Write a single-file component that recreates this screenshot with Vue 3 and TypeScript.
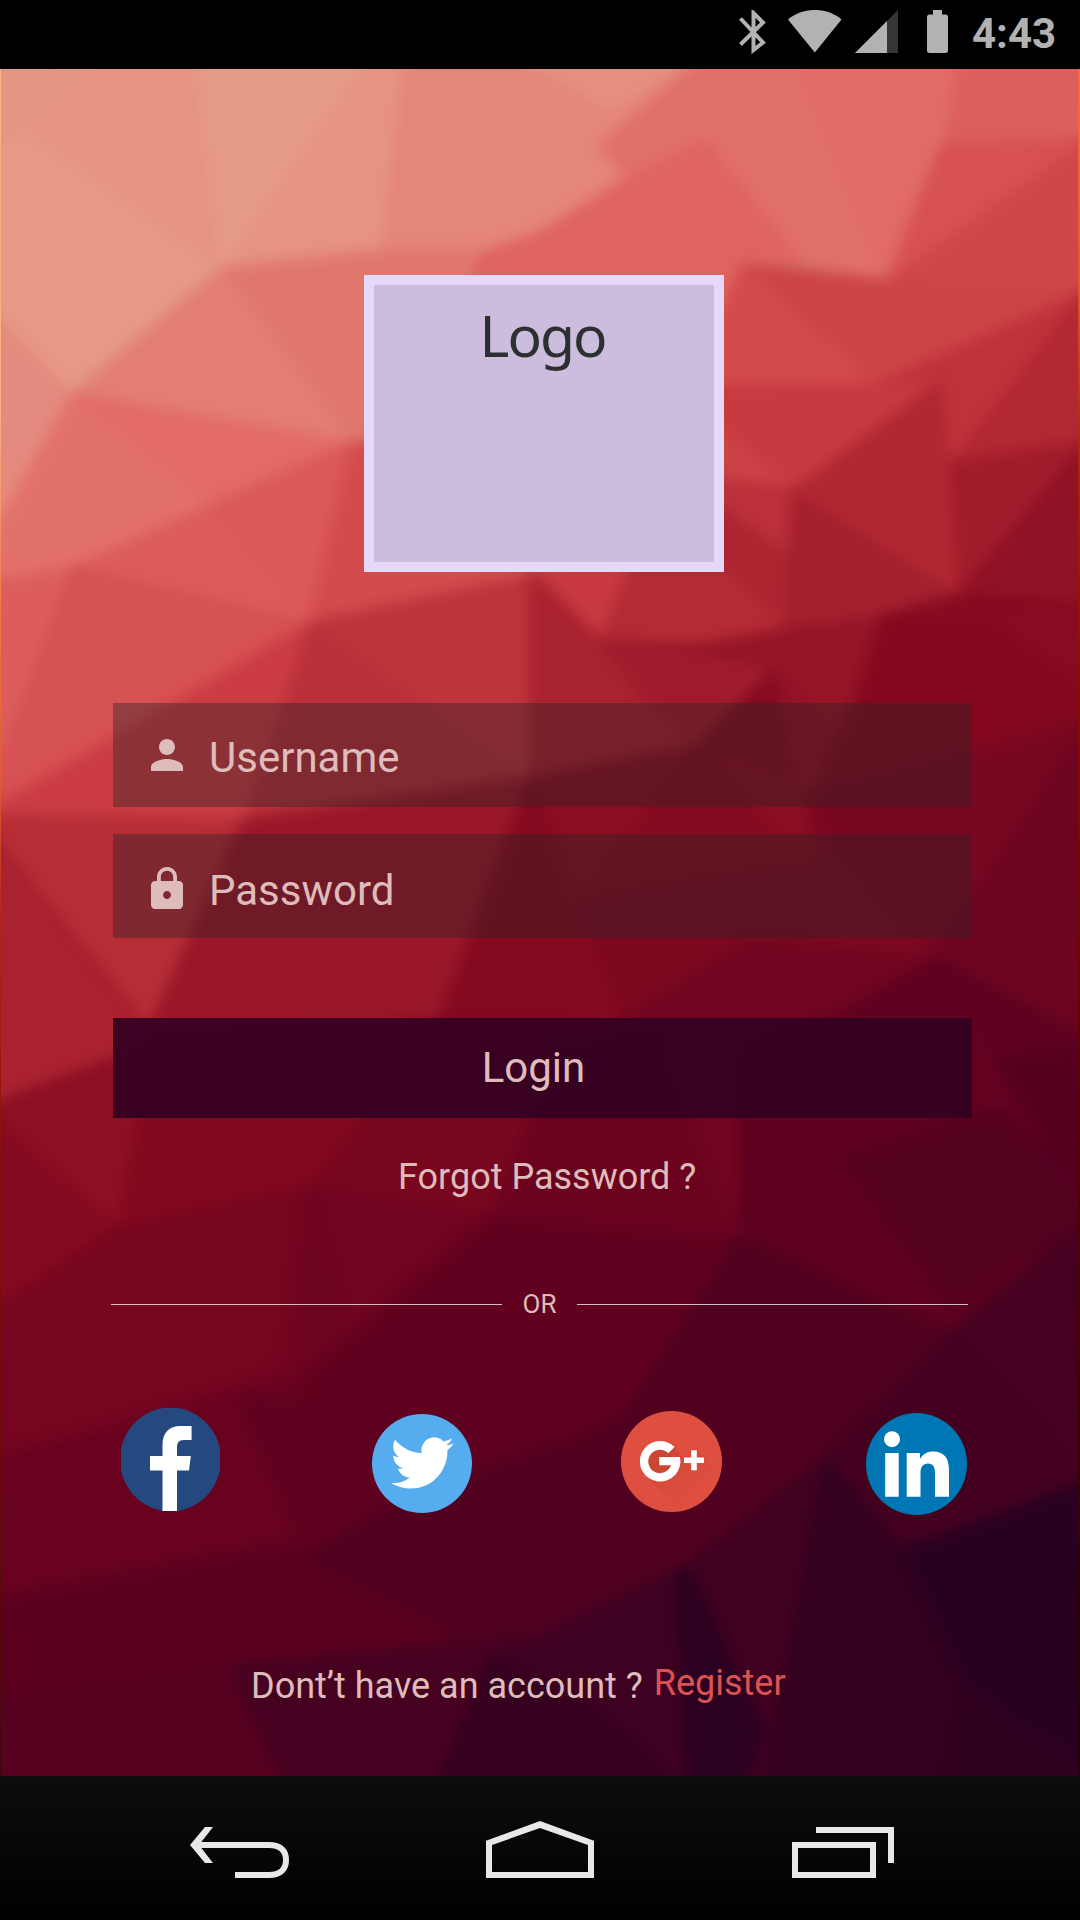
<script setup lang="ts">
interface Facet {
  points: string
  fill: string
}

const raw: [string, string][] = [
  ['-20,50 115,60 31,133 -20,180', '#e59683'],
  ['115,50 195,50 222,268 31,133', '#e69381'],
  ['195,50 375,50 222,268', '#e59b87'],
  ['375,50 406,50 382,250 222,268', '#e69382'],
  ['31,133 222,268 72,394 -20,305 -20,150', '#e59986'],
  ['406,50 710,50 598,146 626,178 540,232 482,252 382,250', '#e48679'],
  ['500,50 710,50 610,110', '#e59080'],
  ['-20,300 72,394 -20,560', '#e48a7e'],
  ['222,268 382,250 490,250 400,442 352,442', '#e0776d'],
  ['72,394 222,268 352,442', '#e27e73'],
  ['72,394 352,442 210,505', '#e26b66'],
  ['72,394 210,505 72,567 -20,585 -20,555', '#e2716a'],
  ['352,442 310,622 210,505', '#db5958'],
  ['72,567 210,505 310,622', '#dc5c5a'],
  ['-20,583 72,567 0,770 -20,800', '#dc5d5c'],
  ['72,567 310,622 180,700 -20,820 0,760', '#d65152'],
  ['352,442 310,622 540,578 540,442', '#d44b4d'],
  ['310,622 530,576 530,777 242,822', '#b83039'],
  ['310,622 530,576 530,777', '#bd343b'],
  ['310,622 242,822 -20,815 180,700', '#ca3c42'],
  ['-20,815 242,820 155,1035', '#b62d36'],
  ['-20,820 155,1042 -20,1108', '#aa2230'],
  ['242,820 530,777 420,1070 130,1070', '#991728'],
  ['-20,1108 155,1042 117,1230', '#8c0f22'],
  ['-20,1105 117,1228 50,1280 -20,1330', '#840a20'],
  ['482,252 540,232 626,178 705,137 805,262 743,264 700,400 400,442', '#df645f'],
  ['710,50 795,50 888,280 805,262 705,137 626,178 598,146', '#e07068'],
  ['795,50 965,50 888,280', '#e16b66'],
  ['965,50 1100,50 1100,140 939,144', '#dc5f5b'],
  ['888,280 939,144 1100,138', '#d75153'],
  ['888,280 1100,130 1100,298', '#cf4749'],
  ['743,264 888,280 1100,290 874,385', '#cc4446'],
  ['743,264 874,385 700,388 700,350', '#d34b4d'],
  ['700,386 874,384 941,380 792,490 700,480', '#c73a40'],
  ['700,410 785,482 700,480', '#cb4145'],
  ['874,385 1100,285 950,462 941,380', '#bf323a'],
  ['1100,272 1100,440 950,464', '#b22833'],
  ['700,478 792,488 790,558 700,500', '#bb3039'],
  ['700,495 790,556 790,630 625,560', '#ac2531'],
  ['792,490 941,380 950,462 958,594', '#b12832'],
  ['792,490 958,594 880,618 785,630', '#a4202e'],
  ['950,462 1100,440 958,594', '#a11b2b'],
  ['1100,425 1100,604 958,594', '#901225'],
  ['530,560 640,560 600,640', '#c83a40'],
  ['632,560 715,560 790,630 657,653 600,638', '#b42b35'],
  ['530,570 600,638 657,655 790,640 760,700 695,745 530,777', '#a9222f'],
  ['600,640 785,645 775,672 690,745 643,700', '#a01c2c'],
  ['600,640 657,653 785,628 880,616 870,720 805,800 770,690 772,668', '#961526'],
  ['880,616 958,594 1100,604 1100,740 960,770 800,800 855,700', '#84091f'],
  ['880,616 958,594 1100,690 1100,660 1100,604', '#880c21'],
  ['530,777 698,745 578,902 460,1030 430,1050', '#8a0e22'],
  ['775,668 700,742 578,902 815,865 802,793', '#850b20'],
  ['698,747 802,778 814,862', '#8b0e22'],
  ['775,668 830,720 812,800 800,790', '#921226'],
  ['802,795 972,749 1100,712 929,960', '#7a0720'],
  ['1100,700 1100,1045 929,958', '#6d0520'],
  ['578,902 815,865 809,807 932,960 745,945 654,1011 540,1080 400,1060', '#7c0820'],
  ['530,777 578,902 620,1020 600,1070 420,1070', '#840a20'],
  ['747,943 936,958 833,1018 800,1060 560,1060', '#70051f'],
  ['936,958 1100,1042 1100,1230 833,1180 700,1130 740,1050 833,1018', '#5f0120'],
  ['990,1060 1100,1042 1100,1200 1060,1190', '#560020'],
  ['972,1015 1060,1190 1100,1220 972,1105', '#640220'],
  ['155,1042 440,1020 364,1116 308,1186 117,1230', '#82091e'],
  ['440,1020 580,1020 560,1116 492,1215 308,1186 364,1116', '#78061f'],
  ['560,1040 745,1020 738,1238 492,1217', '#6b031f'],
  ['660,1040 748,1020 738,1238', '#70051f'],
  ['742,1090 830,1090 953,1318 738,1238', '#5f0121'],
  ['843,1160 1000,1108 1100,1214 953,1312', '#550120'],
  ['-20,1320 117,1228 308,1186 290,1330 270,1400 -20,1470', '#76051f'],
  ['308,1186 492,1215 340,1400 270,1390 290,1330', '#71041f'],
  ['308,1186 370,1400 290,1400', '#6d041f'],
  ['492,1213 738,1236 623,1415 500,1475 400,1500 270,1400 330,1350', '#62011f'],
  ['738,1236 953,1331 826,1458 678,1572 540,1640 480,1500 623,1411', '#51011f'],
  ['1100,1210 1100,1490 950,1331', '#460120'],
  ['953,1328 1100,1480 902,1550 823,1454', '#44011f'],
  ['-20,1460 100,1430 280,1375 420,1500 300,1550 -20,1620', '#68021f'],
  ['-20,1600 300,1540 520,1640 230,1668 -20,1720', '#5b011f'],
  ['240,1400 623,1411 500,1475 373,1513 300,1545', '#5f0120'],
  ['373,1513 560,1440 680,1572 540,1640 480,1650 300,1560', '#520120'],
  ['-20,1700 230,1665 300,1800 -20,1800', '#56011f'],
  ['230,1665 520,1635 463,1727 440,1800 290,1800', '#470120'],
  ['489,1655 540,1636 680,1568 720,1800 430,1800', '#3e0121'],
  ['489,1655 600,1712 700,1800 430,1800 463,1727', '#36001f'],
  ['826,1456 678,1570 740,1800 780,1800', '#40011f'],
  ['826,1458 902,1549 1100,1480 1100,1800 760,1800 781,1701', '#33001f'],
  ['902,1549 1100,1476 1100,1800 960,1680', '#2a0020'],
  ['676,1568 692,1575 764,1730 740,1800 690,1800', '#2c0020'],
  ['960,1700 1100,1770 1100,1800 940,1800', '#30001f'],
]

const facets: Facet[] = raw.map(([points, fill]) => ({ points, fill }))
</script>

<template>
  <div class="screen">
    <header class="status">
      <svg class="bt" width="28" height="44" viewBox="0 0 28 44">
        <path d="M1.5 8.5L24 32.5L14.500 40V3L24 12.500L1.500 34.500" fill="none" stroke="#b2b2b2" stroke-width="4" />
      </svg>
      <svg class="wifi" width="54" height="43" viewBox="0 0 54 43">
        <path d="M0 9.500C15 -3.200 39 -3.200 53.500 9.500L26.800 42.500Z" fill="#b2b2b2" />
      </svg>
      <svg class="signal" width="43" height="43" viewBox="0 0 43 43">
        <path d="M43 0V43H0Z" fill="#353535" />
        <path d="M32 11V43H0Z" fill="#b2b2b2" />
      </svg>
      <svg class="battery" width="21" height="43" viewBox="0 0 21 43">
        <path d="M6 0H15V4.500H18.500Q21 4.500 21 7V40.500Q21 43 18.500 43H2.500Q0 43 0 40.500V7Q0 4.500 2.500 4.500H6Z" fill="#b2b2b2" />
      </svg>
      <span class="time">4:43</span>
    </header>

    <main class="content">
      <svg class="backdrop" width="1080" height="1707" viewBox="0 69 1080 1707">
        <defs>
          <filter id="soften" x="-5%" y="-5%" width="110%" height="110%" color-interpolation-filters="sRGB">
            <feGaussianBlur stdDeviation="7" />
          </filter>
          <linearGradient id="base" x1="0" y1="0" x2="0" y2="1">
            <stop offset="0" stop-color="#e59683" />
            <stop offset=".35" stop-color="#b32a35" />
            <stop offset=".6" stop-color="#78061f" />
            <stop offset="1" stop-color="#32001f" />
          </linearGradient>
          <linearGradient id="rimLeft" x1="0" y1="0" x2="0" y2="1">
            <stop offset="0" stop-color="#fdb27a" />
            <stop offset=".2" stop-color="#fdb27a" />
            <stop offset=".33" stop-color="#f47044" />
            <stop offset=".42" stop-color="#e65a34" />
            <stop offset=".5" stop-color="#b52412" />
            <stop offset=".65" stop-color="#861005" />
            <stop offset="1" stop-color="#40050c" />
          </linearGradient>
          <linearGradient id="rimRight" x1="0" y1="0" x2="0" y2="1">
            <stop offset="0" stop-color="#f86c42" />
            <stop offset=".12" stop-color="#e85830" />
            <stop offset=".22" stop-color="#b02413" />
            <stop offset=".35" stop-color="#8e0c02" />
            <stop offset=".6" stop-color="#5c0206" />
            <stop offset="1" stop-color="#1c0408" />
          </linearGradient>
        </defs>
        <rect x="0" y="69" width="1080" height="1707" fill="url(#base)" />
        <g filter="url(#soften)">
          <polygon
            v-for="(f, i) in facets"
            :key="i"
            :points="f.points"
            :fill="f.fill"
            :stroke="f.fill"
            stroke-width="2"
          />
        </g>
        <rect x="0" y="69" width="1" height="1707" fill="url(#rimLeft)" />
        <rect x="1078" y="69" width="2" height="1707" fill="url(#rimRight)" />
      </svg>

      <div class="logo"><span>Logo</span></div>

      <div class="field">
        <svg width="48" height="48" viewBox="0 0 24 24">
          <path d="M12 12c2.210 0 4-1.790 4-4s-1.790-4-4-4-4 1.790-4 4 1.790 4 4 4zm0 2c-2.670 0-8 1.340-8 4v2h16v-2c0-2.660-5.330-4-8-4z" />
        </svg>
        <span class="user">Username</span>
      </div>
      <div class="field second">
        <svg width="48" height="48" viewBox="0 0 24 24">
          <path d="M18 8h-1V6c0-2.760-2.240-5-5-5S7 3.240 7 6v2H6c-1.100 0-2 .9-2 2v10c0 1.100.9 2 2 2h12c1.100 0 2-.9 2-2V10c0-1.100-.9-2-2-2zm-6 9c-1.100 0-2-.9-2-2s.9-2 2-2 2 .9 2 2-.9 2-2 2zm3.100-9H8.900V6c0-1.710 1.390-3.100 3.100-3.100 1.710 0 3.100 1.390 3.100 3.100v2z" />
        </svg>
        <span class="pass">Password</span>
      </div>

      <button class="login" type="button">Login</button>
      <div class="forgot"><span>Forgot Password ?</span></div>

      <div class="divider">
        <i></i>
        <span>OR</span>
        <i></i>
      </div>

      <div class="social">
        <svg class="fb" width="99" height="103" viewBox="0 0 99 103">
          <ellipse cx="49.500" cy="51.500" rx="50.500" ry="52" fill="#25497f" />
          <path d="M41.500 103V62.600H29V48H41.500V37C41.500 24 49 18 59 18H70.600V32H63C57.500 32 56 35 56 39.500V48H69.800L68 62.600H56V103Z" fill="#fff" />
        </svg>
        <svg class="tw" width="100" height="99" viewBox="0 0 100 99">
          <ellipse cx="50" cy="49.500" rx="50" ry="49.500" fill="#55acee" />
          <path transform="translate(18.700 17.400) scale(2.630)" d="M23.953 4.570a10 10 0 01-2.825.775 4.958 4.958 0 002.163-2.723c-.951.555-2.005.959-3.127 1.184a4.920 4.920 0 00-8.384 4.482C7.690 8.095 4.067 6.130 1.640 3.162a4.822 4.822 0 00-.666 2.475c0 1.710.870 3.213 2.188 4.096a4.904 4.904 0 01-2.228-.616v.060a4.923 4.923 0 003.946 4.827 4.996 4.996 0 01-2.212.085 4.936 4.936 0 004.604 3.417 9.867 9.867 0 01-6.102 2.105c-.390 0-.779-.023-1.170-.067a13.995 13.995 0 007.557 2.209c9.053 0 13.998-7.496 13.998-13.985 0-.210 0-.420-.015-.630A9.935 9.935 0 0024 4.590z" fill="#fff" />
        </svg>
        <svg class="gp" width="101" height="101" viewBox="0 0 101 101">
          <defs>
            <linearGradient id="gshade" x1="0" y1="0" x2="1" y2="1">
              <stop offset="0" stop-color="#c9402f" />
              <stop offset=".75" stop-color="#df4f3f" stop-opacity="0" />
            </linearGradient>
            <clipPath id="gclip"><ellipse cx="50.500" cy="50.500" rx="50.500" ry="50.500" /></clipPath>
          </defs>
          <ellipse cx="50.500" cy="50.500" rx="50.500" ry="50.500" fill="#df4f3f" />
          <g clip-path="url(#gclip)">
            <path d="M25 65L53 36L62 46L76 39L110 73V120H80Z" fill="url(#gshade)" />
            <circle cx="39" cy="50.300" r="13" fill="#cc4636" />
          </g>
          <path d="M53.600 36A20.300 20.300 0 1 0 59 46H38.300V54.300H50A11.700 11.700 0 1 1 47.200 42.200Z" fill="#fff" />
          <path d="M70.200 39.300H75.800V46.500H83V52.100H75.800V59.300H70.200V52.100H63V46.500H70.200Z" fill="#fff" />
        </svg>
        <svg class="li" width="101" height="102" viewBox="0 0 101 102">
          <ellipse cx="50.500" cy="51" rx="50.500" ry="51" fill="#0077b5" />
          <circle cx="26" cy="26.200" r="8" fill="#fff" />
          <path d="M19.200 40H32.700V83.700H19.200ZM40.700 40H54V46C57 41 61 38.500 67 38.500C78 38.500 83 45 83 57V83.700H69V60C69 54 67 50.500 62 50.500C57 50.500 54.500 54 54.500 60V83.700H40.700Z" fill="#fff" />
        </svg>
      </div>

      <p class="signup">
        <span class="ask">Dont’t have an account ?</span>
        <a class="register">Register</a>
      </p>
    </main>

    <nav class="navbar">
      <svg width="99" height="57" viewBox="190 1821 99 57">
        <path d="M235 1875H269C281 1875 286 1869 286 1860C286 1851 281 1845 269 1845H196" fill="none" stroke="#e8e8e8" stroke-width="6" />
        <path d="M213 1827H205L190 1845L205 1863H213L199 1845Z" fill="#e8e8e8" />
      </svg>
      <svg width="108" height="57" viewBox="486 1821 108 57">
        <path fill-rule="evenodd" d="M486 1840.700L540 1821L594 1840.700V1878H486ZM492 1845V1872H588V1845L540 1828Z" fill="#e8e8e8" />
      </svg>
      <svg width="102" height="57" viewBox="792 1821 102 57">
        <path fill-rule="evenodd" d="M792 1842H876V1878H792ZM798 1848V1872H870V1848ZM816 1827H894V1863H888V1833H816Z" fill="#e8e8e8" />
      </svg>
    </nav>
  </div>
</template>

<style>
body {
  margin: 0;
  background: #000;
}
</style>

<style scoped>
.screen {
  width: 1080px;
  height: 1920px;
  display: flex;
  flex-direction: column;
  overflow: hidden;
  font-family: Roboto, "Liberation Sans", sans-serif;
  color: #dfbcbc;
}
svg {
  display: block;
  flex: none;
}
.status {
  flex: none;
  height: 69px;
  background: #000;
  display: flex;
  align-items: flex-start;
  padding: 10px 0 0 739px;
  box-sizing: border-box;
}
.wifi { margin-left: 21px; }
.signal { margin-left: 13px; }
.battery { margin-left: 29px; }
.time {
  margin: -1px 0 0 24px;
  font-size: 42px;
  line-height: 50px;
  font-weight: 700;
  color: #b2b2b2;
}
.content {
  position: relative;
  z-index: 0;
  flex: none;
  height: 1707px;
  display: flex;
  flex-direction: column;
  overflow: hidden;
}
.backdrop {
  position: absolute;
  inset: 0;
  z-index: -1;
}
.logo {
  flex: none;
  box-sizing: border-box;
  width: 360px;
  height: 297px;
  margin: 206px 0 0 364px;
  border: 10px solid #e6d8f7;
  background: #ccbddf;
  color: #2d2f30;
  font-family: "Noto Sans", "Open Sans", sans-serif;
  font-size: 57px;
  line-height: 78px;
  text-align: center;
  padding: 11px 3px 0 0;
  letter-spacing: -2px;
}
.field {
  flex: none;
  width: 859px;
  height: 104px;
  margin: 131px 0 0 113px;
  box-sizing: border-box;
  padding: 28px 0 0 30px;
  display: flex;
  align-items: flex-start;
  background: rgba(47, 33, 37, 0.4);
  font-size: 42px;
  line-height: 50px;
}
.field svg { fill: #dfbcbc; }
.field.second {
  margin-top: 27px;
  padding-top: 31px;
}
.field .user { margin: 2px 0 0 18px; }
.field .pass { margin: 1px 0 0 18px; }
.login {
  flex: none;
  width: 859px;
  height: 100px;
  margin: 80px 0 0 113px;
  padding: 0 18px 0 0;
  border: 0;
  background: rgba(50, 0, 33, 0.9);
  color: inherit;
  font: 42px/100px Roboto, "Liberation Sans", sans-serif;
  text-align: center;
}
.forgot {
  margin: 38px 0 0 398px;
  font-size: 36px;
  line-height: 42px;
}
.divider {
  display: flex;
  align-items: center;
  margin: 91px 0 0 111px;
  width: 857px;
  height: 30px;
  font-size: 26px;
  line-height: 30px;
}
.divider i {
  width: 391px;
  height: 1px;
  background: #d3bfc0;
}
.divider span {
  flex: 1;
  text-align: center;
}
.social {
  display: flex;
  align-items: flex-start;
  margin: 89px 0 0 121px;
  height: 108px;
}
.tw { margin: 6px 0 0 152px; }
.gp { margin: 3px 0 0 149px; }
.li { margin: 5px 0 0 144px; }
.signup {
  display: flex;
  align-items: flex-start;
  margin: 145px 0 0 251px;
  font-size: 36px;
  line-height: 42px;
  white-space: nowrap;
}
.ask { margin-top: 4px; }
.register {
  margin: 1px 0 0 11px;
  color: #d95352;
}
.navbar {
  flex: none;
  height: 144px;
  box-sizing: border-box;
  padding: 45px 0 0 190px;
  display: flex;
  gap: 197px;
  background: linear-gradient(#0d0d0d, #000);
}
.navbar svg:last-child { margin-left: 1px; }
</style>
